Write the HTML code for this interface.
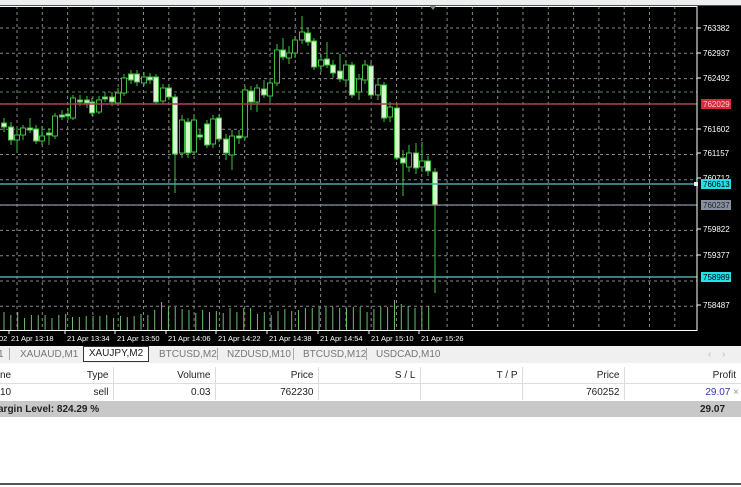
<!DOCTYPE html>
<html><head><meta charset="utf-8"><style>
body{margin:0;width:741px;height:487px;overflow:hidden;background:#fff;font-family:"Liberation Sans",sans-serif;position:relative}
#top{position:absolute;left:0;top:0;width:741px;height:5px;background:#eceef0;border-bottom:1px solid #555}
#chart{position:absolute;left:0;top:6px;width:741px;height:340px;background:#000}
#tabs{position:absolute;left:0;top:346px;width:741px;height:17px;background:#f0f0f0;font-size:10px;color:#777}
#tabs span{position:absolute;top:3px;white-space:nowrap}
.sep{width:1px;height:12px;background:#aaa;top:2px!important}
table{position:absolute;left:0;top:367px;border-collapse:collapse;font-size:10px;color:#222;table-layout:fixed;width:741px}
td{height:16px;padding:0 4px;text-align:right;border-right:1px solid #ddd;white-space:nowrap;overflow:hidden}
#sum{position:absolute;left:0;top:401px;width:741px;height:16px;background:#c8c8c8;font-size:10px;font-weight:bold;color:#222}
#bl{position:absolute;left:0;top:483px;width:741px;height:2px;background:#555}
</style></head><body>
<div id="top"></div>
<div id="chart"><svg id="s" width="741" height="340" xmlns="http://www.w3.org/2000/svg" font-family="Liberation Sans" font-size="8"></svg></div>
<div id="tabs">
<span style="left:-2px">1</span><span class="sep" style="left:9px"></span>
<span style="left:20px">XAUAUD,M1</span>
<span style="left:83px;top:0;height:14px;width:64px;background:#fff;border:1px solid #333;color:#222;padding:0;text-align:center;line-height:14px">XAUJPY,M2</span>
<span style="left:159px">BTCUSD,M2</span><span class="sep" style="left:217px"></span>
<span style="left:227px">NZDUSD,M10</span><span class="sep" style="left:293px"></span>
<span style="left:303px">BTCUSD,M12</span><span class="sep" style="left:366px"></span>
<span style="left:376px">USDCAD,M10</span>
<span style="left:708px;color:#bbb">‹</span><span style="left:722px;color:#bbb">›</span>
</div>
<table>
<colgroup><col style="width:20px"><col style="width:93px"><col style="width:102px"><col style="width:103px"><col style="width:102px"><col style="width:102px"><col style="width:102px"><col style="width:117px"></colgroup>
<tr style="border-bottom:1px solid #ddd"><td style="text-align:left;padding-left:0;border:none">ne</td><td>Type</td><td>Volume</td><td>Price</td><td>S / L</td><td>T / P</td><td>Price</td><td style="border:none;padding-right:5px">Profit</td></tr>
<tr><td style="text-align:left;padding-left:0;border:none">10</td><td>sell</td><td>0.03</td><td>762230</td><td></td><td></td><td>760252</td><td style="border:none;color:#33a;padding-right:2px">29.07 <span style="color:#999">×</span></td></tr>
</table>
<div id="sum"><span style="position:absolute;left:-2px;top:3px">argin Level: 824.29 %</span><span style="position:absolute;left:700px;top:3px">29.07</span></div>
<div id="bl"></div>
<script>
var s=document.getElementById('s'),h='';
for(var x=17;x<697;x+=25.3)h+='<line x1="'+x.toFixed(1)+'" y1="0" x2="'+x.toFixed(1)+'" y2="324" stroke="#888" stroke-dasharray="3,3" stroke-width="1"/>';
for(var y=22;y<324;y+=25.3)h+='<line x1="0" y1="'+y.toFixed(1)+'" x2="697" y2="'+y.toFixed(1)+'" stroke="#888" stroke-dasharray="3,3" stroke-width="1"/>';
h+='<line x1="0" y1="86" x2="697" y2="86" stroke="#5a8a5a" stroke-dasharray="3,3"/>';
var vh=[18,15,18,12,15,15,15,12,15,16,13,13,14,14,14,15,12,14,13,14,16,15,20,28,23,23,21,20,17,20,18,19,17,22,18,22,22,16,18,15,19,21,19,20,22,22,23,23,23,22,22,23,23,18,21,23,23,30,26,24,22,22,24];
for(var i=0;i<vh.length;i++){var vx=4+i*6.85;h+='<line x1="'+vx+'" y1="'+(324-vh[i])+'" x2="'+vx+'" y2="324" stroke="#6fbf6f" stroke-width="1"/>';}
var c=[[4,123,127,1,118,132],[11,127,140,1,122,145],[17,135,140,0,128,152],[23,128,135,0,125,140],[30,128,130,1,118,133],[36,129,141,1,125,144],[42,136,141,0,126,145],[49,133,135,1,128,145],[55,116,136,0,113,139],[62,115,117,1,110,120],[68,114,116,1,108,120],[73,98,118,0,95,120],[80,100,102,1,95,106],[87,100,103,1,96,108],[92,102,113,1,98,116],[99,100,112,0,96,114],[105,97,99,1,92,102],[112,97,102,1,92,106],[118,93,103,0,88,106],[124,78,93,0,74,96],[131,74,80,1,70,84],[137,74,82,1,70,86],[144,77,83,0,72,86],[150,77,80,1,73,84],[156,77,102,1,74,104],[163,88,101,0,84,104],[169,88,97,1,84,100],[175,97,154,1,94,193],[182,120,153,0,115,158],[188,122,153,1,118,158],[194,120,152,0,115,155],[200,135,137,1,130,140],[207,124,145,1,120,148],[213,119,144,0,115,148],[219,118,139,1,114,142],[226,139,153,1,134,160],[232,136,155,0,130,170],[239,136,138,1,130,144],[245,90,137,0,86,140],[251,91,102,1,86,110],[257,88,102,0,84,112],[264,89,95,1,80,98],[270,83,96,0,78,102],[277,50,83,0,44,86],[283,50,57,1,38,60],[289,53,58,0,46,64],[295,40,53,0,36,58],[302,32,40,0,16,44],[308,33,42,1,28,46],[314,41,67,1,38,70],[321,60,66,0,54,72],[327,59,65,1,42,68],[333,65,73,1,60,78],[340,71,79,1,54,82],[346,65,80,0,60,84],[352,65,95,1,62,98],[359,79,92,0,74,100],[365,65,80,0,60,84],[371,66,95,1,62,98],[378,85,95,0,78,100],[384,85,118,1,82,122],[390,107,117,0,102,122],[397,108,158,1,104,160],[403,158,163,1,150,196],[409,153,167,0,145,172],[416,153,168,1,143,174],[422,161,167,0,142,172],[428,161,171,1,156,176],[435,172,205,1,168,293]];
c.forEach(function(k){var x=k[0],yo=-6;
h+='<line x1="'+x+'" y1="'+(k[4]+yo)+'" x2="'+x+'" y2="'+(k[5]+yo)+'" stroke="#3fbf3f"/>';
h+='<rect x="'+(x-2.5)+'" y="'+(k[1]+yo)+'" width="5" height="'+Math.max(1,k[2]-k[1])+'" fill="'+(k[3]?'#d8f5d0':'#000')+'" stroke="#3fbf3f" stroke-width="1"/>';});
h+='<line x1="0" y1="98" x2="697" y2="98" stroke="#b04050" stroke-width="1.5"/>';
h+='<line x1="0" y1="178" x2="697" y2="178" stroke="#4aa8a8" stroke-width="1.5"/>';
h+='<line x1="0" y1="199" x2="697" y2="199" stroke="#8890a0" stroke-width="1.2"/>';
h+='<line x1="0" y1="271" x2="697" y2="271" stroke="#4aa8a8" stroke-width="1.5"/>';
h+='<rect x="-1" y="0.5" width="698" height="324" fill="none" stroke="#fff" stroke-width="1"/>';
var p=[[22,'763382'],[47,'762937'],[72,'762492'],[123,'761602'],[147,'761157'],[172,'760712'],[223,'759822'],[249,'759377'],[299,'758487']];
p.forEach(function(q){h+='<line x1="697" y1="'+q[0]+'" x2="701" y2="'+q[0]+'" stroke="#fff"/><text x="703" y="'+(q[0]+3)+'" fill="#fff">'+q[1]+'</text>';});
function tag(y,bg,fg,t){h+='<rect x="701" y="'+(y-5)+'" width="30" height="10" fill="'+bg+'"/><text x="703" y="'+(y+3)+'" fill="'+fg+'">'+t+'</text>';}
tag(98,'#d8283c','#fcc','762029');tag(178,'#22e0e8','#000','760613');tag(199,'#8890a0','#222','760237');tag(271,'#22e0e8','#000','758989');
h+='<rect x="694" y="176" width="4" height="4" fill="#cff"/>';
var t=['02','21 Apr 13:18','21 Apr 13:34','21 Apr 13:50','21 Apr 14:06','21 Apr 14:22','21 Apr 14:38','21 Apr 14:54','21 Apr 15:10','21 Apr 15:26'];
var tx=[-1,11,67,117,168,218,269,320,371,421];
t.forEach(function(v,i){h+='<text x="'+tx[i]+'" y="335" fill="#fff" font-size="7.5">'+v+'</text>';if(i>0)h+='<line x1="'+(tx[i]-2)+'" y1="324" x2="'+(tx[i]-2)+'" y2="328" stroke="#fff"/>';});
h+='<polygon points="430,0 436,0 433,4" fill="#888"/>';
s.innerHTML=h;
</script>
</body></html>
